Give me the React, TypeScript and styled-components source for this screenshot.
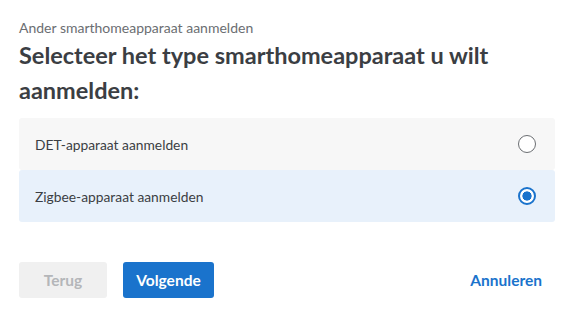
import React, { useState } from 'react';
import styled, { createGlobalStyle } from 'styled-components';

const GlobalStyle = createGlobalStyle`
  body {
    margin: 0;
    background: #ffffff;
    font-family: Lato, "Noto Sans", sans-serif;
    color: #3b3e43;
  }
`;

const options = [
  { id: 'det', label: 'DET-apparaat aanmelden' },
  { id: 'zigbee', label: 'Zigbee-apparaat aanmelden' },
];

const App = () => {
  const [selected, setSelected] = useState('zigbee');

  return (
    <Wrapper>
      <GlobalStyle />
      <Caption>Ander smarthomeapparaat aanmelden</Caption>
      <Heading>Selecteer het type smarthomeapparaat u wilt aanmelden:</Heading>
      <OptionList>
        {options.map((o) => (
          <Option key={o.id} $active={selected === o.id} onClick={() => setSelected(o.id)}>
            <span>{o.label}</span>
            <Radio $checked={selected === o.id} />
          </Option>
        ))}
      </OptionList>
      <Footer>
        <ButtonGroup>
          <SecondaryButton disabled>Terug</SecondaryButton>
          <PrimaryButton>Volgende</PrimaryButton>
        </ButtonGroup>
        <LinkButton>Annuleren</LinkButton>
      </Footer>
    </Wrapper>
  );
};

const Wrapper = styled.div`
  width: 536px;
  padding: 19px 19px 0;
  display: flex;
  flex-direction: column;
`;
const Caption = styled.div`
  font-size: 14px;
  line-height: 18px;
  color: #6b6e72;
`;
const Heading = styled.h1`
  margin: 1px 0 0;
  font-size: 23.5px;
  font-weight: 700;
  line-height: 35px;
  color: #3b3e43;
`;
const OptionList = styled.ul`
  list-style: none;
  margin: 10px 0 0;
  padding: 0;
  display: flex;
  flex-direction: column;
`;
const Option = styled.li<{ $active: boolean }>`
  height: 52px;
  padding: 0 19px 0 16px;
  display: flex;
  align-items: center;
  justify-content: space-between;
  font-size: 13.8px;
  color: #3b3e43;
  background: ${({ $active }) => ($active ? '#e8f1fb' : '#f7f7f7')};
  border-radius: 3px;
  cursor: pointer;
`;
const Radio = styled.span<{ $checked: boolean }>`
  width: 18px;
  height: 18px;
  box-sizing: border-box;
  border-radius: 50%;
  border: ${({ $checked }) => ($checked ? '2px solid #1a73cc' : '1.5px solid #6b6e72')};
  background: ${({ $checked }) =>
    $checked ? 'radial-gradient(circle, #1a73cc 0 4.3px, #ffffff 4.9px)' : '#ffffff'};
`;
const Footer = styled.div`
  margin-top: 40px;
  display: flex;
  align-items: center;
  justify-content: space-between;
`;
const ButtonGroup = styled.div`
  display: flex;
  gap: 16px;
`;
const BaseButton = styled.button`
  height: 36px;
  border: none;
  border-radius: 3px;
  font-family: Lato, "Noto Sans", sans-serif;
  font-size: 15.5px;
  font-weight: 700;
  cursor: pointer;
`;
const SecondaryButton = styled(BaseButton)`
  width: 88px;
  background: #f0f0f0;
  color: #b4b6b9;
  cursor: default;
`;
const PrimaryButton = styled(BaseButton)`
  width: 91px;
  background: #1a73cc;
  color: #ffffff;
`;
const LinkButton = styled(BaseButton)`
  background: none;
  color: #1a73cc;
  padding: 0 13px 0 0;
`;

export default App;
